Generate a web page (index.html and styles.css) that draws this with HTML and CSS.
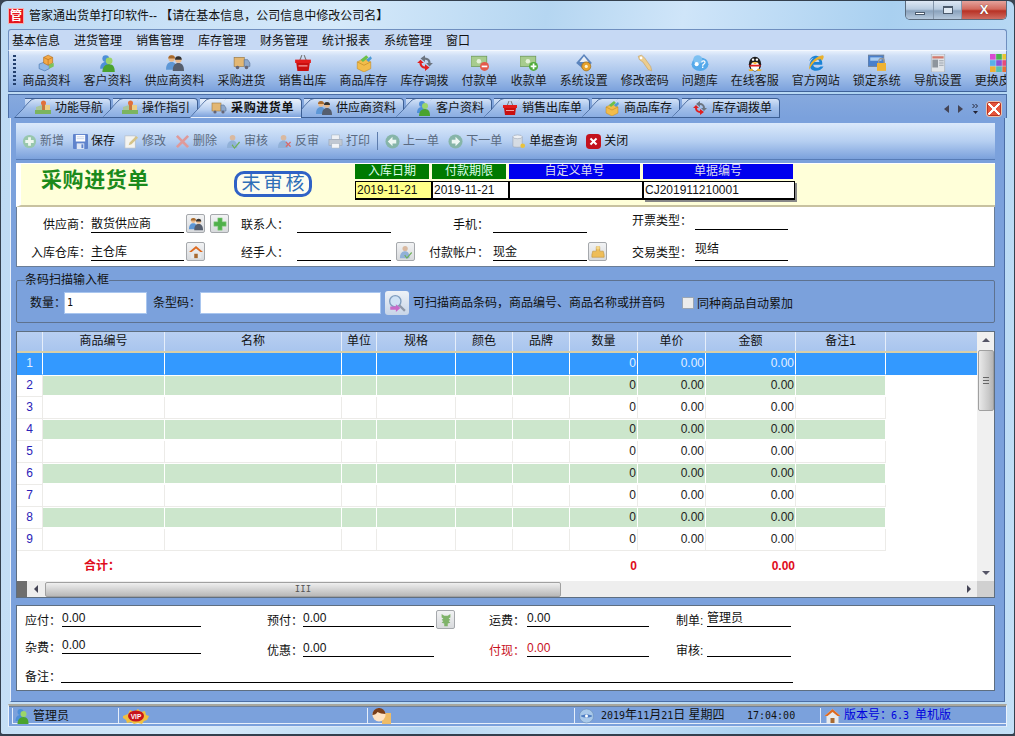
FILE: index.html
```html
<!DOCTYPE html>
<html lang="zh-CN">
<head>
<meta charset="utf-8">
<title>管家通出货单打印软件</title>
<link rel="stylesheet" href="styles.css">
</head>
<body>
<svg class="defs" aria-hidden="true">
  <symbol id="i-box" viewBox="0 0 16 16"><path d="M1 9l5-2 4 2v4l-4 2-5-2z" fill="#8fb7e6" stroke="#4a78b0" stroke-width=".6"/><path d="M5 3l4-2 4 2v5l-4 2-4-2z" fill="#f3a947" stroke="#b8701c" stroke-width=".6"/><path d="M5 3l4 2 4-2M9 5v5" fill="none" stroke="#b8701c" stroke-width=".6"/><path d="M10 9l4-1v3l-4 2z" fill="#7cc35a"/></symbol>
  <symbol id="i-cust" viewBox="0 0 16 16"><circle cx="6" cy="4" r="3" fill="#4d8fd8"/><path d="M1 13c0-4 2-6 5-6s4 2 4 6z" fill="#4d8fd8"/><circle cx="9" cy="6" r="3" fill="#9bd56a"/><path d="M3 16c0-4 2-7 6-7s5 3 5 7z" fill="#4aa32e"/></symbol>
  <symbol id="i-supp" viewBox="0 0 16 16"><circle cx="5" cy="4" r="2.8" fill="#e9b98a"/><path d="M5 1a3 3 0 0 0-3 3h6a3 3 0 0 0-3-3z" fill="#a66a2e"/><path d="M0 14c0-5 2-7 5-7s4 2 4 7z" fill="#5d97d6"/><circle cx="11" cy="5" r="2.8" fill="#e9b98a"/><path d="M11 2a3 3 0 0 0-3 3h6a3 3 0 0 0-3-3z" fill="#333"/><path d="M6 15c0-5 2-7 5-7s5 2 5 7z" fill="#555e6e"/></symbol>
  <symbol id="i-truck" viewBox="0 0 16 16"><rect x="1" y="3" width="9" height="8" fill="#e3b773" stroke="#9a7a45" stroke-width=".6"/><path d="M10 5h3l2 3v3h-5z" fill="#8fa9cc" stroke="#5d7598" stroke-width=".6"/><circle cx="4" cy="12" r="1.6" fill="#667"/><circle cx="12" cy="12" r="1.6" fill="#667"/></symbol>
  <symbol id="i-bask" viewBox="0 0 16 16"><path d="M5 6l2-5M11 6L9 1" stroke="#777" fill="none"/><rect x="1" y="5" width="14" height="3" fill="#e21c1c"/><path d="M2 8h12l-1 7H3z" fill="#c90f0f"/><path d="M4 10h8v1H4z" fill="#f3a0a0"/></symbol>
  <symbol id="i-stock" viewBox="0 0 16 16"><path d="M2 7l6-3 6 3v6l-6 3-6-3z" fill="#f2bc4b" stroke="#c08a25" stroke-width=".5"/><path d="M2 7l6 3 6-3" fill="none" stroke="#c08a25" stroke-width=".6"/><path d="M5 5l5-4 2 2-5 4z" fill="#6cc04a"/><path d="M10 5l4-3 1 2-3 3z" fill="#4d9ad6"/></symbol>
  <symbol id="i-swap" viewBox="0 0 16 16"><path d="M8 3a5 5 0 0 1 5 5h2l-3 3-3-3h2a3 3 0 0 0-3-3V7L4 4l4-3z" fill="#6b7480"/><path d="M8 13a5 5 0 0 1-5-5H1l3-3 3 3H5a3 3 0 0 0 3 3V9l4 3-4 3z" fill="#e01f1f"/></symbol>
  <symbol id="i-payout" viewBox="0 0 16 16"><rect x="0" y="2" width="14" height="9" fill="#a7cc8e" stroke="#6d9a55" stroke-width=".7"/><circle cx="7" cy="6.500" r="2" fill="#e5f2da"/><circle cx="12" cy="11" r="4" fill="#e35a4a"/><rect x="9.500" y="10.300" width="5" height="1.500" fill="#fff"/></symbol>
  <symbol id="i-payin" viewBox="0 0 16 16"><rect x="0" y="2" width="14" height="9" fill="#a7cc8e" stroke="#6d9a55" stroke-width=".7"/><circle cx="7" cy="6.500" r="2" fill="#e5f2da"/><circle cx="12" cy="11" r="4" fill="#4faa3a"/><path d="M9.500 10.300h1.800V8.500h1.500v1.800h1.800v1.500h-1.800v1.800h-1.500v-1.800H9.500z" fill="#fff"/></symbol>
  <symbol id="i-sys" viewBox="0 0 16 16"><path d="M8 0l7 8-7 6-7-6z" fill="#5b84bd"/><path d="M8 2l4 5H4z" fill="#e9eef6"/><circle cx="10" cy="11" r="4" fill="#e8a32d" stroke="#9c6a12" stroke-width=".6"/><circle cx="10" cy="11" r="1.400" fill="#fff3cf"/></symbol>
  <symbol id="i-key" viewBox="0 0 16 16"><path d="M2 2l3-1 3 3 5 7 1 4-3-1-5-7-3-2z" fill="#eccd8f" stroke="#c9a565" stroke-width=".6"/><circle cx="4.500" cy="3.500" r="1.200" fill="#fff"/></symbol>
  <symbol id="i-ques" viewBox="0 0 16 16"><ellipse cx="8" cy="9" rx="7.500" ry="6" fill="#55a9ea"/><circle cx="6" cy="5" r="4" fill="#7cc0f2"/><path d="M9 7.500a2 2 0 1 1 3 1.700c-.7.400-1 .800-1 1.300h-1.200c0-1 .5-1.600 1.300-2.100a.9.900 0 1 0-1-.9zM9.800 11.200H11v1.300H9.800z" fill="#fff"/><circle cx="5" cy="9" r="1.800" fill="#fff"/></symbol>
  <symbol id="i-qq" viewBox="0 0 16 16"><ellipse cx="8" cy="9" rx="5.500" ry="6.500" fill="#1c1c1c"/><ellipse cx="8" cy="11" rx="3.800" ry="4" fill="#fff"/><circle cx="6.300" cy="5" r="1.100" fill="#fff"/><circle cx="9.700" cy="5" r="1.100" fill="#fff"/><path d="M5 7.300h6l-3 1.700z" fill="#f6b221"/><path d="M3 9.500h10v1.500H3z" fill="#e01f1f"/><path d="M2 14l4-1v2H3zM14 14l-4-1v2h3z" fill="#f6b221"/></symbol>
  <symbol id="i-ie" viewBox="0 0 16 16"><path d="M13.500 9.500H5.500c.2 2.800 4.300 3.600 6.500 1.500h2.700C12.800 15 6.200 16.300 3.400 13 1 9.800 3 5.400 6 3.300 4.400 3.800 3 5 2 6.400 2.800 3.300 6 1.200 9 1.700c3 .5 5 3.800 4.500 7.800zM5.500 7h5.500c-.2-2.700-5-2.900-5.500 0z" fill="#1c83d6"/><path d="M2 14C1 9 7 2 14 1c2 1 0 4-1 5C13 3 6 5 2 14z" fill="#e8b02e"/></symbol>
  <symbol id="i-lock" viewBox="0 0 16 16"><rect x="0" y="1" width="14" height="10" fill="#4a80cc" stroke="#6f7f94" stroke-width=".8"/><rect x="2" y="3" width="10" height="3" fill="#a9cdf2"/><rect x="8" y="8" width="8" height="7" fill="#eeb233"/><path d="M9.500 8V6.500a2.500 2.500 0 0 1 5 0V8" fill="none" stroke="#999" stroke-width="1.200"/></symbol>
  <symbol id="i-page" viewBox="0 0 16 16"><rect x="2" y="0" width="12" height="16" fill="#dfe3e8" stroke="#a6adb6" stroke-width=".6"/><rect x="3" y="2" width="10" height="2" fill="#d27a6c"/><rect x="3" y="5" width="5" height="7" fill="#8d949c"/><path d="M9 6h4M9 8h4M9 10h4" stroke="#9aa2ab"/></symbol>
  <symbol id="i-skin" viewBox="0 0 16 16"><rect width="5" height="5" fill="#d94bd0"/><rect x="5.500" width="5" height="5" fill="#4bb54b"/><rect x="11" width="5" height="5" fill="#e8c52e"/><rect y="5.500" width="5" height="5" fill="#5ab0e8"/><rect x="5.500" y="5.500" width="5" height="5" fill="#8a50d8"/><rect x="11" y="5.500" width="5" height="5" fill="#e84b7a"/><rect y="11" width="5" height="5" fill="#eeb233"/><rect x="5.500" y="11" width="5" height="5" fill="#58c0b0"/><rect x="11" y="11" width="5" height="5" fill="#e8703a"/></symbol>
  <symbol id="i-nav" viewBox="0 0 16 16"><path d="M1 14V7l6-2v9z" fill="#a9c79c"/><path d="M7 14V5h8v9z" fill="#eccf85"/><path d="M7 1h3v9H7z" fill="#c8783e"/><circle cx="8.500" cy="3" r="2.500" fill="#e2703a"/><path d="M0 10h16v4H0z" fill="#7bb45f"/></symbol>
  <symbol id="i-add" viewBox="0 0 16 16"><circle cx="8" cy="8" r="7" fill="#98c7ad"/><path d="M6.500 3.500h3v3h3v3h-3v3h-3v-3h-3v-3h3z" fill="#eef7f0"/></symbol>
  <symbol id="i-plus" viewBox="0 0 16 16"><path d="M5.500 1h5v4.500H15v5h-4.500V15h-5v-4.500H1v-5h4.500z" fill="#4fb04a" stroke="#8fd08a" stroke-width=".6"/></symbol>
  <symbol id="i-save" viewBox="0 0 16 16"><rect x="0" y="0" width="16" height="16" rx="1" fill="#5f83cc"/><rect x="3" y="1" width="10" height="7" fill="#fff"/><path d="M4 3h8M4 5h8" stroke="#c5d2ea"/><rect x="4" y="10" width="8" height="6" fill="#dfe7f5"/><rect x="9" y="11" width="2" height="4" fill="#5f83cc"/></symbol>
  <symbol id="i-edit" viewBox="0 0 16 16"><rect x="1" y="2" width="11" height="13" fill="#f4f4f0" stroke="#b5bcc6" stroke-width=".7"/><path d="M5 12l1-3 7-7 2 2-7 7z" fill="#d5c48a"/></symbol>
  <symbol id="i-del" viewBox="0 0 16 16"><path d="M1 3l2-2 5 5 5-5 2 2-5 5 5 5-2 2-5-5-5 5-2-2 5-5z" fill="#df9a9a"/></symbol>
  <symbol id="i-aud" viewBox="0 0 16 16"><circle cx="7" cy="4" r="3" fill="#d9b9a0"/><path d="M1 15c0-6 3-8 6-8s5 2 5 8z" fill="#91b1d8"/><path d="M7 11l2 3 5-6 1 1-6 7-3-4z" fill="#6fb05a"/></symbol>
  <symbol id="i-unaud" viewBox="0 0 16 16"><circle cx="7" cy="4" r="3" fill="#d9b9a0"/><path d="M1 15c0-6 3-8 6-8s5 2 5 8z" fill="#91b1d8"/><path d="M9 9l1-1 2 2 2-2 1 1-2 2 2 2-1 1-2-2-2 2-1-1 2-2z" fill="#d86a6a"/></symbol>
  <symbol id="i-print" viewBox="0 0 16 16"><rect x="4" y="1" width="8" height="5" fill="#eef1f5" stroke="#a6b0bd" stroke-width=".6"/><rect x="1" y="6" width="14" height="6" fill="#c1c8d2" stroke="#9aa3b0" stroke-width=".6"/><rect x="4" y="10" width="8" height="5" fill="#f3f5f8" stroke="#a6b0bd" stroke-width=".6"/></symbol>
  <symbol id="i-prev" viewBox="0 0 16 16"><circle cx="8" cy="8" r="7.500" fill="#86b5a8"/><path d="M8 3v3h4v4H8v3L3 8z" fill="#eef7f3"/></symbol>
  <symbol id="i-next" viewBox="0 0 16 16"><circle cx="8" cy="8" r="7.500" fill="#86b5a8"/><path d="M8 3v3H4v4h4v3l5-5z" fill="#eef7f3"/></symbol>
  <symbol id="i-db" viewBox="0 0 16 16"><path d="M2 3v10c0 1.500 10 1.500 10 0V3z" fill="#d6dce3" stroke="#9aa3b0" stroke-width=".6"/><ellipse cx="7" cy="3" rx="5" ry="2" fill="#eef1f5" stroke="#9aa3b0" stroke-width=".6"/><circle cx="12.500" cy="12.500" r="2.500" fill="#e8c23e"/></symbol>
  <symbol id="i-close" viewBox="0 0 16 16"><rect width="16" height="16" rx="4" fill="#c3121c"/><path d="M4 5.500L5.500 4 8 6.500 10.500 4 12 5.500 9.500 8 12 10.500 10.500 12 8 9.500 5.500 12 4 10.500 6.500 8z" fill="#fff"/></symbol>
  <symbol id="i-home" viewBox="0 0 16 16"><path d="M8 1l8 7h-2v7H2V8H0z" fill="#e8eaec"/><path d="M8 1l8 7h-3L8 4 3 8H0z" fill="#de6a20"/><rect x="6" y="10" width="4" height="5" fill="#a86a30"/></symbol>
  <symbol id="i-bag" viewBox="0 0 16 16"><path d="M6 2h4v5h4l1 4v3H1v-3l1-4h4z" fill="#eebd58" stroke="#b98a34" stroke-width=".6"/><circle cx="8" cy="3" r="2" fill="#f5d88a"/></symbol>
  <symbol id="i-find" viewBox="0 0 16 16"><circle cx="6.500" cy="6.500" r="5" fill="#cfe2f5" stroke="#7f9dbf" stroke-width="1.200"/><path d="M10 10l5 5" stroke="#8e98a8" stroke-width="2"/><path d="M2 11h5v-2l4 3.500L7 16v-2H2z" fill="#c86ac8"/></symbol>
  <symbol id="i-tree" viewBox="0 0 16 16"><path d="M3 1l3 2h4l3-2v4l-2 1 2 2-2 1 2 2-3 1v3H6v-3l-3-1 2-2-2-1 2-2-2-1z" fill="#7fb36a"/></symbol>
  <symbol id="i-vip" viewBox="0 0 26 16"><path d="M0 8l5-2 2-4 4 2 4-3 3 3 4-1 1 4 3 1-2 4-3 1-2 3-4-1-4 1-3-2-4 1-1-3-3-2z" fill="#f0c040"/><ellipse cx="13" cy="8" rx="8" ry="5.500" fill="#c8141c"/></symbol>
  <symbol id="i-girl" viewBox="0 0 20 16"><rect x="11" y="5" width="9" height="11" fill="#eebc68"/><circle cx="8" cy="7" r="6.500" fill="#ffe3c4"/><path d="M1.500 7a6.500 6.500 0 0 1 13-1c-3 0-6-1-8-2-1 2-3 3-5 3z" fill="#7a3e1a"/></symbol>
  <symbol id="i-globe" viewBox="0 0 16 16"><circle cx="8" cy="8" r="7" fill="#a9c9ea" stroke="#6d8fb6" stroke-width=".6"/><path d="M2 8c3-2 9-2 12 0-3 2-9 2-12 0z" fill="#4e7dc2"/><circle cx="8" cy="8" r="1.500" fill="#fff"/></symbol>
  <symbol id="i-more" viewBox="0 0 7 12"><path d="M.5 1l2 2-2 2M3.500 1l2 2-2 2" fill="none" stroke="#223" stroke-width="1"/><path d="M1 8h5L3.500 11z" fill="#223"/></symbol>
</svg>

<div class="window">
  <header class="titlebar">
    <span class="logo">管</span>
    <span class="title">管家通出货单打印软件-- 【请在基本信息，公司信息中修改公司名】</span>
    <div class="wincontrols">
      <span class="wc wc-min"><i></i></span>
      <span class="wc wc-max"><i></i></span>
      <span class="wc wc-close">X</span>
    </div>
  </header>

  <nav class="menubar">
    <span>基本信息</span><span>进货管理</span><span>销售管理</span><span>库存管理</span><span>财务管理</span><span>统计报表</span><span>系统管理</span><span>窗口</span>
  </nav>

  <div class="mainbar">
    <span class="grip"></span>
    <a class="mb"><svg><use href="#i-box"/></svg>商品资料</a>
    <a class="mb"><svg><use href="#i-cust"/></svg>客户资料</a>
    <a class="mb"><svg><use href="#i-supp"/></svg>供应商资料</a>
    <a class="mb"><svg><use href="#i-truck"/></svg>采购进货</a>
    <a class="mb"><svg><use href="#i-bask"/></svg>销售出库</a>
    <a class="mb"><svg><use href="#i-stock"/></svg>商品库存</a>
    <a class="mb"><svg><use href="#i-swap"/></svg>库存调拨</a>
    <a class="mb"><svg><use href="#i-payout"/></svg>付款单</a>
    <a class="mb"><svg><use href="#i-payin"/></svg>收款单</a>
    <a class="mb"><svg><use href="#i-sys"/></svg>系统设置</a>
    <a class="mb"><svg><use href="#i-key"/></svg>修改密码</a>
    <a class="mb"><svg><use href="#i-ques"/></svg>问题库</a>
    <a class="mb"><svg><use href="#i-qq"/></svg>在线客服</a>
    <a class="mb"><svg><use href="#i-ie"/></svg>官方网站</a>
    <a class="mb"><svg><use href="#i-lock"/></svg>锁定系统</a>
    <a class="mb"><svg><use href="#i-page"/></svg>导航设置</a>
    <a class="mb"><svg><use href="#i-skin"/></svg>更换皮肤</a>
  </div>

  <div class="tabbar">
    <a class="tab t1"><svg><use href="#i-nav"/></svg>功能导航</a>
    <a class="tab t2"><svg><use href="#i-nav"/></svg>操作指引</a>
    <a class="tab t3 active"><svg><use href="#i-truck"/></svg>采购进货单</a>
    <a class="tab t4"><svg><use href="#i-supp"/></svg>供应商资料</a>
    <a class="tab t5"><svg><use href="#i-cust"/></svg>客户资料</a>
    <a class="tab t6"><svg><use href="#i-bask"/></svg>销售出库单</a>
    <a class="tab t7"><svg><use href="#i-stock"/></svg>商品库存</a>
    <a class="tab t8"><svg><use href="#i-swap"/></svg>库存调拨单</a>
    <div class="tabnav">
      <i class="ar-l"></i><i class="ar-r"></i><svg class="more"><use href="#i-more"/></svg><span class="tabclose"></span>
    </div>
  </div>

  <main class="panel">
    <div class="docbar">
      <a class="db off"><svg><use href="#i-add"/></svg>新增</a>
      <a class="db"><svg><use href="#i-save"/></svg>保存</a>
      <a class="db off"><svg><use href="#i-edit"/></svg>修改</a>
      <a class="db off"><svg><use href="#i-del"/></svg>删除</a>
      <a class="db off"><svg><use href="#i-aud"/></svg>审核</a>
      <a class="db off"><svg><use href="#i-unaud"/></svg>反审</a>
      <a class="db off"><svg><use href="#i-print"/></svg>打印</a>
      <span class="sep"></span>
      <a class="db off"><svg><use href="#i-prev"/></svg>上一单</a>
      <a class="db off"><svg><use href="#i-next"/></svg>下一单</a>
      <a class="db"><svg><use href="#i-db"/></svg>单据查询</a>
      <a class="db"><svg><use href="#i-close"/></svg>关闭</a>
    </div>

    <section class="dochead">
      <h1>采购进货单</h1>
      <div class="stamp">未审核</div>
      <div class="meta">
        <div class="mc g w76"><b>入库日期</b><span class="yel">2019-11-21</span></div>
        <div class="mc g w76"><b>付款期限</b><span>2019-11-21</span></div>
        <div class="mc bl w133"><b>自定义单号</b><span></span></div>
        <div class="mc bl w152"><b>单据编号</b><span>CJ201911210001</span></div>
      </div>
    </section>

    <section class="form">
      <label class="lb">供应商：</label><div class="fd">散货供应商</div>
      <div class="btns"><span class="sb"><svg><use href="#i-supp"/></svg></span><span class="sb"><svg><use href="#i-plus"/></svg></span></div>
      <label class="lb l2">联系人：</label><div class="fd"></div><div></div>
      <label class="lb pr4">手机：</label><div class="fd"></div><div></div>
      <label class="lb raised pr3">开票类型：</label><div class="fd raised"></div>

      <label class="lb">入库仓库：</label><div class="fd">主仓库</div>
      <div class="btns"><span class="sb"><svg><use href="#i-home"/></svg></span></div>
      <label class="lb l2">经手人：</label><div class="fd"></div>
      <div class="btns b-in"><span class="sb"><svg><use href="#i-aud"/></svg></span></div>
      <label class="lb pr4">付款帐户：</label><div class="fd">现金</div>
      <div class="btns b-tight"><span class="sb"><svg><use href="#i-bag"/></svg></span></div>
      <label class="lb pr3">交易类型：</label><div class="fd tall">现结</div>
    </section>

    <fieldset class="scan">
      <legend>条码扫描输入框</legend>
      <div class="scanrow">
        <span class="s-q">数量：</span><span class="inp i-q">1</span>
        <span class="s-c">条型码：</span><span class="inp i-c"></span>
        <span class="findbtn"><svg><use href="#i-find"/></svg></span>
        <span class="hint">可扫描商品条码，商品编号、商品名称或拼音码</span>
        <span class="chk"></span><span class="chk-l">同种商品自动累加</span>
      </div>
    </fieldset>

    <section class="grid">
      <div class="gwrap">
        <div class="gmain">
          <div class="gr ghead"><span></span><span>商品编号</span><span>名称</span><span>单位</span><span>规格</span><span>颜色</span><span>品牌</span><span>数量</span><span>单价</span><span>金额</span><span>备注1</span><span></span></div>
          <div class="gr row sel"><span>1</span><span></span><span></span><span></span><span></span><span></span><span></span><span>0</span><span>0.00</span><span>0.00</span><span></span><span></span></div>
          <div class="gr row alt"><span>2</span><span></span><span></span><span></span><span></span><span></span><span></span><span>0</span><span>0.00</span><span>0.00</span><span></span><span></span></div>
          <div class="gr row"><span>3</span><span></span><span></span><span></span><span></span><span></span><span></span><span>0</span><span>0.00</span><span>0.00</span><span></span><span></span></div>
          <div class="gr row alt"><span>4</span><span></span><span></span><span></span><span></span><span></span><span></span><span>0</span><span>0.00</span><span>0.00</span><span></span><span></span></div>
          <div class="gr row"><span>5</span><span></span><span></span><span></span><span></span><span></span><span></span><span>0</span><span>0.00</span><span>0.00</span><span></span><span></span></div>
          <div class="gr row alt"><span>6</span><span></span><span></span><span></span><span></span><span></span><span></span><span>0</span><span>0.00</span><span>0.00</span><span></span><span></span></div>
          <div class="gr row"><span>7</span><span></span><span></span><span></span><span></span><span></span><span></span><span>0</span><span>0.00</span><span>0.00</span><span></span><span></span></div>
          <div class="gr row alt"><span>8</span><span></span><span></span><span></span><span></span><span></span><span></span><span>0</span><span>0.00</span><span>0.00</span><span></span><span></span></div>
          <div class="gr row"><span>9</span><span></span><span></span><span></span><span></span><span></span><span></span><span>0</span><span>0.00</span><span>0.00</span><span></span><span></span></div>
          <div class="gr total"><span></span><span>合计：</span><span></span><span></span><span></span><span></span><span></span><span>0</span><span></span><span>0.00</span><span></span><span></span></div>
        </div>
        <div class="vbar"><i class="up"></i><span class="vthumb"><em></em></span><i class="down"></i></div>
      </div>
      <div class="hbar"><span class="hcorner"></span><i class="left"></i><span class="hthumb">III</span><i class="right"></i><span class="hend"></span></div>
    </section>

    <section class="foot">
      <span>应付：</span><div class="fv">0.00</div><div></div>
      <span>预付：</span><div class="fv">0.00</div><div class="fbtn"><span class="sb"><svg><use href="#i-tree"/></svg></span></div>
      <span>运费：</span><div class="fv">0.00</div><div></div>
      <span>制单:</span><div class="fv">管理员</div>

      <span class="up3">杂费：</span><div class="fv up3">0.00</div><div></div>
      <span>优惠：</span><div class="fv">0.00</div><div></div>
      <span class="red">付现：</span><div class="fv red">0.00</div><div></div>
      <span>审核:</span><div class="fv"></div>

      <span>备注：</span><div class="fv span-all"></div>
    </section>
  </main>

  <footer class="status">
    <div class="st st1"><svg><use href="#i-cust"/></svg>管理员</div>
    <div class="st st2"><svg class="vip" viewBox="0 0 26 16"><use href="#i-vip"/><text class="vip-t" x="13" y="10.500" text-anchor="middle">VIP</text></svg></div>
    <div class="st st3"><svg class="girl"><use href="#i-girl"/></svg></div>
    <div class="st st4"><svg><use href="#i-globe"/></svg><span class="when"><span class="n">2019</span>年<span class="n">11</span>月<span class="n">21</span>日 星期四</span><span class="clock n">17:04:00</span></div>
    <div class="st st5"><svg><use href="#i-home"/></svg><span>版本号：<span class="n ver-n">6.3</span>单机版</span></div>
  </footer>
</div>
</body>
</html>
```

FILE: styles.css
```css
* { box-sizing: border-box; }
html, body { margin: 0; padding: 0; height: 100%; background: #3a4654; overflow: hidden; }
body { font: 12px/14px "Liberation Sans", "Noto Sans CJK SC", sans-serif; color: #111; }
.defs { position: absolute; width: 0; height: 0; }
a { color: inherit; text-decoration: none; }

.window {
  width: 1015px; height: 736px; overflow: hidden;
  display: flex; flex-direction: column;
  padding: 0 7px 7px;
  border: 1px solid #34404e; border-bottom-width: 2px;
  border-radius: 7px 7px 4px 4px;
  background: linear-gradient(100deg, #bcd9f3 0%, #d5e9fa 30%, #b5d6f1 48%, #cfe5f9 60%, #a9d0f0 78%, #c4e0f7 100%);
}

/* Title bar */
.titlebar { height: 28px; flex: none; display: flex; align-items: flex-start; position: relative; }
.logo {
  width: 16px; height: 16px; margin-top: 7px; flex: none; background: #e4141c; color: #fff;
  box-shadow: inset 0 0 0 1px #f3b0b0;
  font-weight: 700; font-size: 12px; line-height: 16px; text-align: center;
}
.title { margin: 8px 0 0 5px; color: #111; white-space: nowrap; }
.wincontrols {
  margin-left: auto; display: flex; height: 19px; width: 102px; flex: none;
  border: 1px solid #5a6a7c; border-top: 0; border-radius: 0 0 5px 5px; overflow: hidden;
}
.wc { display: flex; align-items: center; justify-content: center; }
.wc-min, .wc-max { width: 28px; background: linear-gradient(#dde8f4, #b8cbe0 45%, #8aa2bc 55%, #b5c8dc); border-right: 1px solid #8496ab; }
.wc-min i { width: 10px; height: 3px; margin-top: 6px; background: #fff; border: 1px solid #4b5a6c; }
.wc-max i { width: 10px; height: 8px; background: #dfe9f3; border: 2px solid #4b5a6c; border-width: 2px 1px 1px; }
.wc-close {
  flex: 1; background: linear-gradient(#e4a39c, #d26a5e 45%, #b83225 55%, #cf6d62);
  color: #fff; font-weight: 700; font-size: 13px; text-shadow: 0 0 1px #422;
}

/* Menu */
.menubar {
  height: 21px; flex: none; display: flex; align-items: center; padding-top: 1px;
  background: #c6d9f4; border: 1px solid #6f8fbf; border-bottom: 0; border-radius: 3px 3px 0 0;
}
.menubar span { padding: 0 7px; }
.menubar span:first-child { padding-left: 3px; }

/* Main toolbar */
.mainbar {
  height: 42px; flex: none; display: flex; align-items: flex-start; overflow: hidden;
  background: linear-gradient(#e7f0fc 0, #cfdff6 12%, #a9c5ec 55%, #7ba1dc 100%);
  border-left: 1px solid #6f8fbf; border-right: 1px solid #6f8fbf; border-bottom: 1px solid #3f6299;
  border-top: 1px solid #f4f8fe;
}
.grip { width: 3px; height: 30px; margin: 4px 0 0 4px; flex: none; background: repeating-linear-gradient(#24406e 0 2px, transparent 2px 4px); }
.mb {
  flex: none; padding: 3px 6.5px 0; display: flex; flex-direction: column; align-items: center; white-space: nowrap; color: #1a1a1a;
}
.mb svg { width: 18px; height: 18px; margin-bottom: 2px; }

/* Tabs */
.tabbar {
  height: 24px; flex: none; margin: 2px 0 0; display: flex; align-items: flex-end; position: relative;
  background: linear-gradient(#86a9de, #7ba1dc);
  border: 1px solid #4b6ea6; border-bottom: 0;
}
.tab {
  position: relative; height: 20px; display: flex; align-items: center; flex: none; white-space: nowrap; padding-right: 7px;
  border: 1px solid #3d5f94; border-left: 0; border-radius: 0 4px 0 0;
  background: linear-gradient(#d3e2f7, #a2bfe9 50%, #8aade2);
  color: #111;
}
.tab::before {
  content: ""; position: absolute; left: -11px; top: -1px; bottom: -1px; width: 19px;
  transform: skewX(-42deg); transform-origin: bottom;
  background: linear-gradient(#d3e2f7, #a2bfe9 50%, #8aade2);
  border-left: 1px solid #3d5f94; border-top: 1px solid #3d5f94; border-bottom: 1px solid #3d5f94;
  border-radius: 4px 0 0 0;
}
.tab svg { position: relative; width: 16px; height: 16px; margin-right: 4px; }
.t1 { margin-left: 16px; padding-left: 10px; }
.t2 { margin-left: 2px; padding-left: 9px; }
.t3 { margin-left: 2px; padding-left: 11px; font-weight: 700; letter-spacing: .6px; background: linear-gradient(#e9f1fc, #b8cff0 60%, #7ba1dc); border-bottom-color: transparent; z-index: 2; }
.t3::before { background: linear-gradient(#e9f1fc, #b8cff0 60%, #7ba1dc); border-bottom-color: transparent; }
.t4 { margin-left: 2px; padding-left: 12px; }
.t5 { margin-left: 2px; padding-left: 10px; }
.t6 { margin-left: 2px; padding-left: 8px; }
.t7 { margin-left: 2px; padding-left: 12px; }
.t8 { margin-left: 2px; padding-left: 10px; }
.tabnav { margin-left: auto; margin-right: 5px; margin-bottom: -1px; display: flex; align-items: center; gap: 9px; height: 20px; }
.ar-l { width: 0; height: 0; border: 4px solid transparent; border-right: 5px solid #445; border-left: 0; }
.ar-r { width: 0; height: 0; border: 4px solid transparent; border-left: 5px solid #445; border-right: 0; }
.more { width: 7px; height: 12px; }
.tabclose {
  width: 14px; height: 14px; margin-left: -1px; border-radius: 2px; outline: 1px solid #f0c0a8;
  background:
    linear-gradient(45deg, transparent 44%, #fff 44% 56%, transparent 56%),
    linear-gradient(-45deg, transparent 44%, #fff 44% 56%, transparent 56%),
    #e4553c;
  border: 1px solid #b32;
}

/* Panel */
.panel {
  height: 584px; flex: none; margin: 0 2px; padding: 5px 9px 0 5px;
  background: #7ba1dc; border: 1px solid #4b6ea6; border-top: 0;
  display: flex; flex-direction: column; border-left-color: #eaf2fc;
}
.docbar {
  height: 37px; flex: none; display: flex; align-items: center; padding-left: 6px; gap: 9px;
  background: linear-gradient(#dbe9fb, #b6cff1 50%, #7ba1dc);
  border-bottom: 1px solid #577cb7;
}
.db { display: flex; align-items: center; gap: 3px; white-space: nowrap; }
.db svg { width: 15px; height: 15px; }
.db.off { color: #5a6a80; }
.sep { width: 1px; height: 18px; background: #5d7cac; margin: 0 -2px; }

/* Head */
.dochead {
  height: 44px; flex: none; margin-top: 3px; display: flex; align-items: flex-start;
  background: #ffffd9; border-left: 5px solid #fff; border-top: 1px solid #fff; border-bottom: 2px solid #c8c2a0;
}
.dochead h1 {
  margin: 3px 0 0 20px; width: 193px; flex: none; font-size: 21px; line-height: 26px; font-weight: 700; color: #1b8a1b; letter-spacing: .6px;
}
.stamp {
  width: 78px; height: 26px; margin-top: 7px; flex: none; border: 3px solid #2f62c6; border-radius: 10px; background: #fdfdf0;
  color: #2f6fb8; font-size: 19px; line-height: 20px; padding-left: 3px; text-align: center; letter-spacing: 3px; white-space: nowrap; overflow: hidden;
}
.meta { display: flex; margin-left: 42px; }
.mc { display: flex; flex-direction: column; flex: none; }
.mc b { display: block; font-weight: 400; color: #dfe; height: 15px; line-height: 15px; text-align: center; margin: 0 2px 0 1px; }
.mc.g b { background: #007a00; }
.mc.bl b { background: #0000ee; color: #dde; }
.mc span {
  display: block; height: 19px; margin: 2px -1px 0 1px; padding-left: 1px; line-height: 16px; background: #fff;
  border: 1px solid #000; border-width: 1px 1px 2px 1px; white-space: nowrap; overflow: hidden;
}
.mc span.yel { background: #ffff88; }
.w76 { width: 77px; }
.w133 { width: 134px; }
.w152 { width: 152px; }
.w152 span { box-shadow: 2px 2px 0 #888; }
.w152 b { margin-right: 1px; }

/* Form */
.form {
  height: 60px; flex: none; background: #fff; border: 1px solid #6a7d96; border-top: 0;
  display: grid; padding-bottom: 5px;
  grid-template-columns: 74px 93px 57px 56px 94px 38px 64px 94px 45px 63px 93px;
  grid-template-rows: 26px 28px;
}
.lb { text-align: right; align-self: end; margin-bottom: 1px; white-space: nowrap; }
.lb.l2 { text-align: left; }
.lb.pr4 { padding-right: 4px; }
.lb.pr3 { padding-right: 3px; }
.fd { border-bottom: 1px solid #000; align-self: end; min-height: 16px; padding-bottom: 1px; line-height: 14px; }
.fd.tall { padding-bottom: 4px; }
.lb.raised { margin-bottom: 5px; }
.fd.raised { margin-bottom: 3px; }
.btns { display: flex; gap: 5px; align-self: end; padding-left: 2px; }
.b-in { padding-left: 5px; }
.b-tight { padding-left: 1px; }
.sb {
  width: 19px; height: 19px; display: flex; align-items: center; justify-content: center;
  background: linear-gradient(#f2f3f4, #d8dadd); border: 1px solid #a5a8ac; border-radius: 2px;
}
.sb svg { width: 14px; height: 14px; }

/* Scan */
.scan {
  height: 51px; flex: none; margin: 5px 0 0; padding: 3px 0 0 13px; min-width: 0;
  border: 1px solid #5e728f; border-radius: 2px;
}
.scan legend { margin-left: -5px; padding: 0; line-height: 16px; color: #111; }
.scanrow { display: flex; align-items: center; height: 22px; white-space: nowrap; margin-top: 1px; }
.inp { height: 22px; background: #fff; border: 1px solid #a9c6ef; line-height: 20px; padding-left: 2px; font-family: "DejaVu Sans Mono", monospace; font-size: 10px; }
.i-q { width: 83px; margin-left: -2px; }
.s-c { margin-left: 6px; }
.i-c { width: 181px; margin-left: -1px; }
.findbtn {
  width: 24px; height: 24px; margin-left: 4px; border-radius: 3px; display: flex; align-items: center; justify-content: center;
  background: linear-gradient(#eef2f7, #c7d5e8);
}
.findbtn svg { width: 18px; height: 18px; }
.hint { margin-left: 4px; }
.chk { width: 12px; height: 12px; margin-left: 17px; background: #ececec; border: 1px solid #9aa6b5; flex: none; }
.chk-l { margin-left: 3px; position: relative; top: 1px; }

/* Grid */
.grid {
  height: 267px; flex: none; margin-top: 8px; background: #fff; border: 1px solid #5e6e80; display: flex; flex-direction: column;
}
.gwrap { display: flex; height: 249px; flex: none; }
.gmain { flex: 1; min-width: 0; }
.gr { display: grid; grid-template-columns: 26px 122px 177px 35px 79px 57px 57px 68px 68px 90px 90px 1fr; }
.ghead { height: 21px; background: linear-gradient(#b8cff1, #a9c5ee); border-bottom: 2px solid #d8cfa8; }
.ghead span { text-align: center; line-height: 18px; border-right: 1px solid #e6eefa; }
.ghead span:last-child { border-right: 0; }
.row { height: 22px; }
.row span { line-height: 21px; border-right: 1px solid #ecebe8; border-bottom: 1px solid #ecebe8; text-align: right; padding-right: 1px; color: #222; }
.row span:first-child { text-align: center; color: #2a22b8; padding: 0; background: #fff; }
.row span:last-child { border: 0; }
.alt span:not(:first-child):not(:last-child) { background: #cce6cc; border-right: 1px solid #fff; border-bottom: 2px solid #fff; border-top: 1px solid #fff; line-height: 19px; }
.sel span, .sel span:first-child { background: #3399ff; color: #e4f0ff; border-color: #fff; border-bottom: 1px solid #3399ff; }
.sel span:last-child { border: 0; }
.total { height: 30px; color: #e00c1c; font-weight: 700; align-items: center; }
.total span { text-align: right; padding-right: 1px; }
.total span:nth-child(2) { text-align: left; padding-left: 41px; white-space: nowrap; }
.vbar { width: 17px; flex: none; background: #f0f0f0; display: flex; flex-direction: column; align-items: center; }
.vbar .up { margin-top: 6px; width: 0; height: 0; border: 4px solid transparent; border-bottom: 4px solid #556; border-top: 0; }
.vthumb {
  margin-top: 8px; width: 16px; height: 61px; background: linear-gradient(90deg, #e9e9e9, #c8c8c8 70%, #b4b4b4); border: 1px solid #a0a0a0; border-radius: 2px;
  display: flex; align-items: center; justify-content: center;
}
.vthumb em { width: 6px; height: 7px; background: repeating-linear-gradient(#666 0 1px, transparent 1px 3px); }
.vbar .down { margin-top: auto; margin-bottom: 6px; width: 0; height: 0; border: 4px solid transparent; border-top: 4px solid #556; border-bottom: 0; }
.hbar { height: 16px; flex: none; display: flex; align-items: center; background: #eeeeee; }
.hcorner { width: 10px; height: 16px; background: #6e6e6e; flex: none; }
.hbar .left { margin-left: 7px; width: 0; height: 0; border: 4px solid transparent; border-right: 4px solid #445; border-left: 0; }
.hthumb {
  margin-left: 7px; width: 516px; height: 15px; border: 1px solid #a0a0a0; border-radius: 2px; background: linear-gradient(#efefef, #c8c8c8 70%, #b8b8b8);
  text-align: center; font: 9px/13px "DejaVu Sans Mono", monospace; color: #555;
}
.hbar .right { margin-left: auto; width: 0; height: 0; border: 4px solid transparent; border-left: 4px solid #445; border-right: 0; }
.hend { width: 17px; height: 16px; margin-left: 6px; background: #d0d0d0; flex: none; }

/* Footer form */
.foot {
  height: 86px; flex: none; margin-top: 7px; background: #fff; border: 1px solid #5e6e80;
  display: grid; padding-left: 8px;
  grid-template-columns: 37px 139px 66px 36px 131px 55px 38px 122px 27px 31px 84px;
  grid-template-rows: 21px 30px 26px;
}
.foot > span { align-self: end; margin-bottom: -1px; white-space: nowrap; }
.foot > .up3 { margin-bottom: 2px; }
.fv { align-self: end; border-bottom: 1px solid #000; min-height: 16px; line-height: 14px; }
.fv.up3 { margin-bottom: 3px; }
.foot .red { color: #c8101c; }
.fbtn { padding-left: 2px; align-self: end; margin-bottom: -2px; }
.span-all { grid-column: 2 / -1; margin: 0 -2px 0 -1px; }

/* Status */
.status {
  height: 23px; flex: none; margin-top: 2px; display: flex; padding: 2px 0 2px 3px;
  background: #7ba1dc; border-top: 2px solid #a8a79e; border-bottom: 1px solid #dbe8f8; border-left: 1px solid #eaf2fc; border-right: 1px solid #eaf2fc;
  box-shadow: inset 0 1px 0 #6d7f99;
}
.st { display: flex; align-items: center; border-left: 1px solid #e6eefa; border-bottom: 1px solid #e6eefa; height: 100%; white-space: nowrap; flex: none; }
.st svg { width: 17px; height: 16px; flex: none; }
.st1 { width: 106px; gap: 2px; padding-left: 1px; }
.st2 { width: 249px; padding-left: 4px; }
.st2 .vip { width: 26px; }
.vip-t { font: 700 6.5px "Liberation Sans", sans-serif; fill: #fff; }
.st3 { width: 207px; padding-left: 3px; }
.st3 .girl { width: 20px; }
.st4 { width: 246px; padding-left: 3px; }
.n { font-family: "DejaVu Sans Mono", monospace; font-size: 10px; }
.when { margin-left: 6px; width: 146px; }
.st5 { flex: 1; padding-left: 3px; gap: 3px; color: #0000dd; }
.ver-n { margin: 0 6px 0 -1px; }
```
